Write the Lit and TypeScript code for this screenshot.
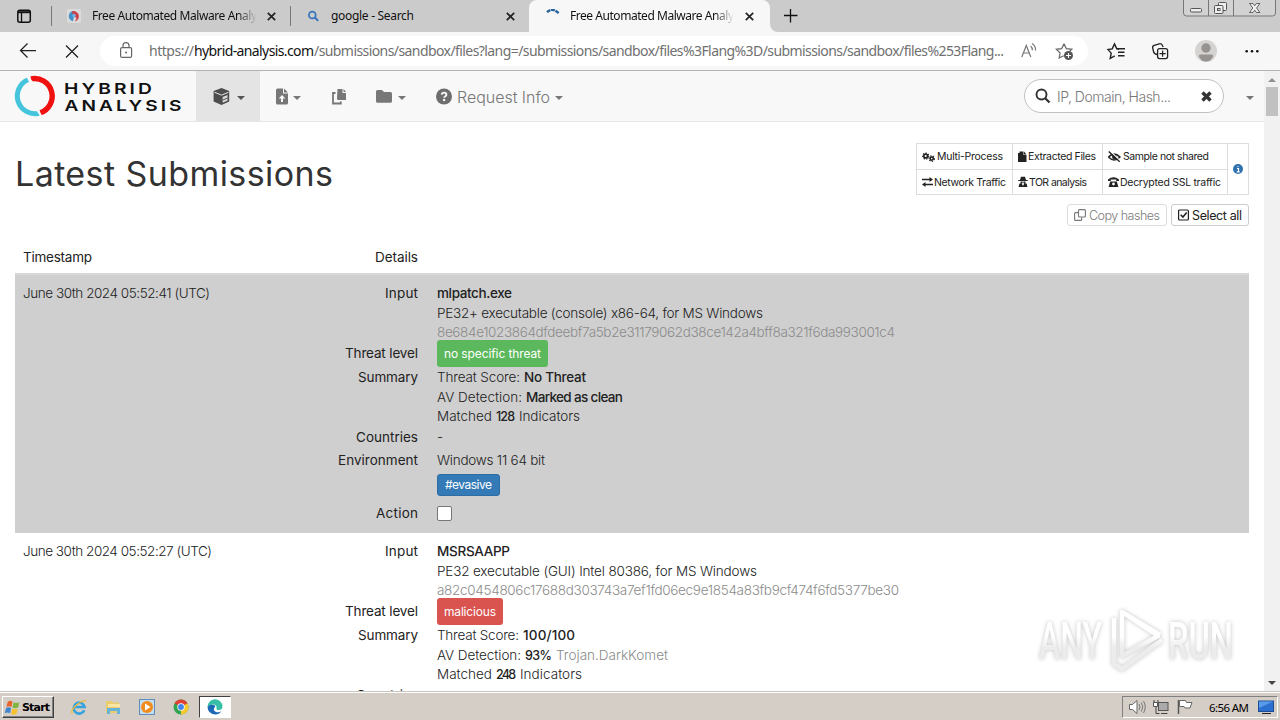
import { html, svg, css, LitElement, nothing } from "lit";
import { customElement, property } from "lit/decorators.js";

// A single line of text whose tracking is spread over a fixed width.
@customElement("fit-text")
export class FitText extends LitElement {
	static styles = css`
		:host {
			display: inline-block;
			white-space: nowrap;
			text-align: left;
		}
	`;

	@property({ type: String }) text = "";
	@property({ type: Number }) width = 0;

	render() {
		return html`<span>${this.text}</span>`;
	}

	updated() {
		const span = this.renderRoot.querySelector("span")!;
		span.style.letterSpacing = "0";
		const natural = span.getBoundingClientRect().width;
		const gaps = Math.max(1, this.text.length - 1);
		span.style.letterSpacing = `${(this.width - natural) / gaps}px`;
		this.style.width = `${this.width}px`;
	}
}

const fit = (text: string, width: number, cls = "") =>
	html`<fit-text class=${cls} .text=${text} .width=${width}></fit-text>`;

const caret = html`<svg class="caret" width="8" height="4" viewBox="0 0 8 4"><path d="M0 0h8L4 4z" fill="currentColor" /></svg>`;

const close = html`<svg class="close" width="9" height="9" viewBox="0 0 9 9">
	<path d="M.8.8l7.4 7.4M8.2.8L.8 8.2" stroke="#222" stroke-width="1.7" />
</svg>`;

const gear = (cx: number, cy: number, r: number) => svg`
	<circle cx=${cx} cy=${cy} r=${r} fill="none" stroke="#222" stroke-width="1.6" />
	<circle cx=${cx} cy=${cy} r=${r + 1.1} fill="none" stroke="#222" stroke-width="1.2" stroke-dasharray="1.4 1.3" />`;

const legendIcons = {
	gears: svg`${gear(3.7, 5, 1.9)}${gear(9.7, 7.6, 1.6)}`,
	file: svg`<path d="M0 2h1.5V.5h4V4h3v7H0z" fill="#222" /><path d="M6 .5l2.5 3H6z" fill="#222" />`,
	hidden: svg`<path d="M.5 6Q6 .3 12 6 6 12 .5 6z" fill="none" stroke="#222" stroke-width="1.5" /><circle cx="6.3" cy="6" r="2.3" fill="#222" /><path d="M2.2 0l10 10" stroke="#fff" stroke-width="1.2" /><path d="M.7.6l11 10.2" stroke="#222" stroke-width="1.4" />`,
	arrows: svg`<path d="M0 3.5h8M2.5 8.5H11" stroke="#222" stroke-width="1.3" /><path d="M7.5.9L11 3.5 7.5 6.1zM3.5 5.9L0 8.5l3.5 2.6z" fill="#222" />`,
	agent: svg`<path d="M2 4h6L7 .8H3zM.3 4h9.4v1H.3zM2.6 5.6h2v1.6h-2zM5.4 5.6h2v1.6h-2zM.6 11l.7-3.200L3.500 7 5 10l1.500-3 2.200.800.700 3.200z" fill="#222" />`,
	phone: svg`<path d="M0 5V3.400Q5.500-1 11 3.400V5H8.300V3.500H2.700V5zM2.200 5.400h6.600L10.400 11H.6z" fill="#222" /><circle cx="5.500" cy="8" r="1.400" fill="#fff" />`,
};

const legend: [keyof typeof legendIcons, number, string, number][][] = [
	[
		["gears", 15, "Multi-Process", 66],
		["file", 10, "Extracted Files", 68],
		["hidden", 15, "Sample not shared", 86],
	],
	[
		["arrows", 12, "Network Traffic", 72],
		["agent", 11, "TOR analysis", 58],
		["phone", 12, "Decrypted SSL traffic", 101],
	],
];

interface Line {
	parts: [text: string, width: number, cls?: string][];
}

interface Submission {
	time: [string, number];
	name: [string, number];
	type: [string, number];
	hash: [string, number];
	verdict: [string, number, string];
	summary: Line[];
	countries?: string;
	environment?: [string, number];
	tag?: [string, number];
}

const submissions: Submission[] = [
	{
		time: ["June 30th 2024 05:52:41 (UTC)", 187],
		name: ["mlpatch.exe", 75],
		type: ["PE32+ executable (console) x86-64, for MS Windows", 326],
		hash: ["8e684e1023864dfdeebf7a5b2e31179062d38ce142a4bff8a321f6da993001c4", 458],
		verdict: ["no specific threat", 97, "ok"],
		summary: [
			{ parts: [["Threat Score:", 83], ["No Threat", 62, "strong"]] },
			{ parts: [["AV Detection:", 85], ["Marked as clean", 97, "strong"]] },
			{ parts: [["Matched", 55], ["128", 19, "strong num"], ["Indicators", 61]] },
		],
		countries: "-",
		environment: ["Windows 11 64 bit", 108],
		tag: ["#evasive", 47],
	},
	{
		time: ["June 30th 2024 05:52:27 (UTC)", 189],
		name: ["MSRSAAPP", 73],
		type: ["PE32 executable (GUI) Intel 80386, for MS Windows", 320],
		hash: ["a82c0454806c17688d303743a7ef1fd06ec9e1854a83fb9cf474f6fd5377be30", 462],
		verdict: ["malicious", 52, "bad"],
		summary: [
			{ parts: [["Threat Score:", 82], ["100/100", 52, "strong"]] },
			{ parts: [["AV Detection:", 84], ["93%", 27, "strong num"], ["Trojan.DarkKomet", 112, "muted"]] },
			{ parts: [["Matched", 55], ["248", 20, "strong num"], ["Indicators", 62]] },
		],
	},
];

@customElement("submission-row")
export class SubmissionRow extends LitElement {
	static styles = css`
		:host {
			display: grid;
			grid-template-columns: 322px 81px 1fr;
			padding: 9px 0 0 0;
			height: 249px;
			line-height: 19.5px;
		}
		.time {
			grid-row: 1 / 8;
			padding-left: 8px;
			font-weight: 300;
		}
		.details {
			grid-column: 2 / 4;
			display: grid;
			grid-template-columns: 81px 1fr;
			column-gap: 19px;
			grid-template-rows: 56px 28px 60px 23px 21px 32px 24px;
		}
		.label {
			text-align: right;
			font-weight: 400;
		}
		.value {
			font-weight: 300;
			white-space: nowrap;
		}
		.value > div {
			display: flex;
			gap: 4px;
		}
		.level {
			padding-top: 4px;
		}
		.strong {
			font-weight: 500;
		}
		.num {
			font-size: 12.5px;
		}
		.muted {
			color: #8b8b8b;
		}
		.badge {
			display: inline-block;
			box-sizing: border-box;
			height: 27px;
			line-height: 28px;
			padding: 0 7px;
			border-radius: 3px;
			color: #fff;
			font-size: 12px;
			font-weight: 400;
		}
		.ok {
			background: #5cb85c;
		}
		.bad {
			background: #d9534f;
		}
		.tag {
			height: 22px;
			line-height: 20px;
			margin-top: 2px;
			background: #337ab7;
			border: 1px solid #2e6da4;
		}
		.box {
			width: 13px;
			height: 13px;
			margin-top: 2px;
			border: 1px solid #767676;
			border-radius: 2px;
			background: #fff;
		}
	`;

	@property({ attribute: false }) item!: Submission;

	render() {
		const s = this.item;
		return html`
			<div class="time">${fit(...s.time)}</div>
			<div class="details">
				<div class="label">${fit("Input", 33)}</div>
				<div class="value">
					<div>${fit(s.name[0], s.name[1], "strong")}</div>
					<div>${fit(...s.type)}</div>
					<div>${fit(s.hash[0], s.hash[1], "muted")}</div>
				</div>
				<div class="label level">${fit("Threat level", 73)}</div>
				<div class="value"><span class="badge ${s.verdict[2]}">${fit(s.verdict[0], s.verdict[1])}</span></div>
				<div class="label">${fit("Summary", 60)}</div>
				<div class="value">
					${s.summary.map((line) => html`<div>${line.parts.map((p) => fit(p[0], p[1], p[2]))}</div>`)}
				</div>
				<div class="label">${fit("Countries", 62)}</div>
				<div class="value">${s.countries ?? nothing}</div>
				${s.environment && s.tag
					? html`
							<div class="label">${fit("Environment", 80)}</div>
							<div class="value">${fit(...s.environment)}</div>
							<div></div>
							<div class="value"><span class="badge tag">${fit(...s.tag)}</span></div>
							<div class="label">${fit("Action", 42)}</div>
							<div class="value"><div class="box"></div></div>
						`
					: nothing}
			</div>
		`;
	}
}

@customElement("app-root")
export class AppRoot extends LitElement {
	static styles = css`
		:host {
			display: flex;
			flex-direction: column;
			position: relative;
			width: 1280px;
			height: 720px;
			overflow: hidden;
			background: #fff;
			color: #222;
			font-family: Inter, "Liberation Sans", sans-serif;
			font-size: 13.5px;
		}
		svg {
			display: block;
			flex: none;
		}
		.tabs {
			display: flex;
			height: 32px;
			background: #cbcbcb;
			font: 12px/32px "Noto Sans", sans-serif;
			color: #111;
		}
		.tab {
			display: flex;
			align-items: center;
			box-sizing: border-box;
			height: 32px;
		}
		.t1 {
			width: 239px;
			padding-left: 15px;
			border-right: 1px solid #777;
			height: 20px;
			margin-top: 6px;
			line-height: 20px;
		}
		.t2 {
			width: 238px;
			padding-left: 16px;
		}
		.t3 {
			width: 241px;
			padding-left: 17px;
			background: #f7f7f7;
			border-radius: 8px 8px 0 0;
		}
		.t1 fit-text,
		.t3 fit-text {
			margin: 0 10px 0 11px;
			-webkit-mask-image: linear-gradient(90deg, #000 88%, transparent);
			mask-image: linear-gradient(90deg, #000 88%, transparent);
		}
		.t3 fit-text {
			margin-left: 10px;
			margin-right: 11px;
		}
		.t2 fit-text {
			margin: 0 92px 0 11px;
		}
		.toolbar {
			display: flex;
			align-items: center;
			height: 38px;
			background: #f7f7f7;
			border-bottom: 1px solid #b4b4b4;
		}
		.address {
			display: flex;
			align-items: center;
			width: 988px;
			height: 30px;
			border-radius: 15px;
			background: #fff;
			color: #707070;
			font: 14px/30px "Noto Sans", sans-serif;
		}
		.address b {
			font-weight: 400;
			color: #111;
		}
		.page {
			display: flex;
			height: 620px;
		}
		.content {
			width: 1264px;
			overflow: hidden;
		}
		.navbar {
			display: flex;
			align-items: center;
			height: 50px;
			background: #f8f8f8;
			border-bottom: 1px solid #e7e7e7;
			color: #777;
			font-size: 16px;
			font-weight: 300;
		}
		.caret {
			margin-top: 4px;
		}
		.active {
			display: flex;
			align-items: center;
			box-sizing: border-box;
			width: 64px;
			height: 50px;
			padding-left: 17px;
			gap: 7px;
			background: #e4e4e4;
			color: #555;
		}
		.item {
			display: flex;
			align-items: center;
		}
		.upload {
			padding-left: 16px;
			gap: 5px;
			width: 55px;
		}
		.folder {
			padding-left: 29px;
			gap: 6px;
			width: 31px;
		}
		.info {
			margin-left: 29px;
			gap: 5px;
		}
		.info fit-text {
			padding-top: 2px;
		}
		.search {
			display: flex;
			align-items: center;
			box-sizing: border-box;
			width: 200px;
			height: 34px;
			margin: 0 22px 0 auto;
			padding: 0 10px 0 10px;
			border: 1px solid #c2c2c2;
			border-radius: 17px;
			background: #fff;
			font-size: 14px;
		}
		.search fit-text {
			margin: 1px 30px 0 6px;
		}
		.last {
			margin-right: 10px;
		}
		.head {
			display: flex;
			justify-content: space-between;
			height: 61px;
			padding: 21px 15px 0 15px;
		}
		h1 {
			margin: 0;
			font-size: 34px;
			font-weight: 400;
			line-height: 62px;
			color: #333;
		}
		.legend {
			display: grid;
			grid-template-columns: 96px 90px 125px 20px;
			grid-template-rows: 26px 24px;
			box-sizing: border-box;
			width: 333px;
			height: 52px;
			border: 1px solid #ddd;
			font-size: 10.5px;
		}
		.cell {
			display: flex;
			align-items: center;
			padding-left: 5px;
			border-right: 1px solid #ddd;
		}
		.upper {
			border-bottom: 1px solid #ddd;
		}
		.tip {
			grid-column: 4;
			grid-row: 1 / 3;
			display: flex;
			align-items: center;
			padding-left: 5px;
		}
		.actions {
			display: flex;
			justify-content: flex-end;
			gap: 4px;
			height: 22px;
			padding-right: 15px;
			font-size: 12.5px;
			font-weight: 300;
		}
		.btn {
			display: flex;
			align-items: center;
			box-sizing: border-box;
			height: 22px;
			padding: 0 6px;
			gap: 3px;
			border: 1px solid #ccc;
			border-radius: 3px;
			font-weight: 400;
		}
		.disabled {
			width: 100px;
			border-color: #ddd;
			color: #7c7c7c;
			font-weight: 300;
		}
		.all {
			width: 78px;
		}
		.table {
			margin: 0 15px;
		}
		.thead {
			display: flex;
			height: 49px;
			box-sizing: border-box;
			padding: 21px 0 0 8px;
			line-height: 20px;
			border-bottom: 2px solid #d8d8d8;
		}
		.thead fit-text + fit-text {
			margin-left: 283px;
		}
		.odd {
			background: #cfcfcf;
		}
		.scroll {
			display: flex;
			flex-direction: column;
			justify-content: space-between;
			width: 16px;
			background: #f1f1f1;
		}
		.thumb {
			width: 12px;
			height: 29px;
			margin: 3px 2px 0;
			background: #c1c1c1;
		}
		.taskbar {
			display: flex;
			justify-content: space-between;
			box-sizing: border-box;
			height: 29px;
			padding: 4px 2px 2px;
			background: #d5cec6;
			border-top: 1px solid #c9c5bf;
			box-shadow: inset 0 1px #fff;
			color: #000;
		}
		.start {
			display: flex;
			align-items: center;
			box-sizing: border-box;
			width: 52px;
			height: 22px;
			gap: 1px;
			padding-left: 1px;
			border: 1px solid;
			border-color: #fff #404040 #404040 #fff;
			box-shadow: inset -1px -1px #808080;
			font: bold 11px "DejaVu Sans", sans-serif;
		}
		.quick {
			display: flex;
			align-items: center;
			gap: 18px;
			margin-right: auto;
			padding-left: 17px;
		}
		.edge {
			display: flex;
			align-items: center;
			justify-content: center;
			box-sizing: border-box;
			width: 32px;
			height: 22px;
			margin-left: -8px;
			border: 1px solid;
			border-color: #404040 #fff #fff #404040;
			background: #fff;
		}
		.tray {
			display: flex;
			align-items: center;
			box-sizing: border-box;
			width: 156px;
			height: 22px;
			border: 1px solid;
			border-color: #808080 #fff #fff #808080;
			font: 11.5px "Noto Sans", sans-serif;
		}
		.tray fit-text {
			margin: 0 9px 0 14px;
		}
		.watermark {
			position: absolute;
			left: 1030px;
			top: 600px;
			filter: drop-shadow(0 0 2px rgba(0, 0, 0, 0.24));
		}
	`;

	private tabs() {
		return html`
			<div class="tabs">
				<svg width="52" height="32" viewBox="0 0 52 32">
					<rect x="17.800" y="10.300" width="12.500" height="11.900" rx="2" fill="none" stroke="#111" stroke-width="1.500" />
					<path d="M18 12.200h12.500" stroke="#111" stroke-width="2" />
					<path d="M21.500 12v10" stroke="#111" stroke-width="1.300" />
					<path d="M51.500 6v20" stroke="#777" />
				</svg>
				<div class="tab t1">
					<svg width="14" height="14" viewBox="0 0 14 14">
						<rect width="14" height="14" rx="1" fill="#dadada" />
						<path d="M8 2a5 5 0 0 0-2 10.300z" fill="#3f8fc8" />
						<path d="M5 2.200A5.300 5.300 0 1 1 8 12.500L9.500 9 6 7z" fill="#cf3f49" />
						<circle cx="7" cy="6.500" r="1.800" fill="#6fb1dd" />
					</svg>
					${fit("Free Automated Malware Analy", 165)} ${close}
				</div>
				<div class="tab t2">
					<svg width="13" height="13" viewBox="0 0 13 13">
						<circle cx="5.300" cy="5" r="3.400" fill="none" stroke="#3374bd" stroke-width="1.700" />
						<path d="M7.800 7.500l3.400 3.400" stroke="#3374bd" stroke-width="2" />
					</svg>
					${fit("google - Search", 83)} ${close}
				</div>
				<div class="tab t3">
					<svg width="14" height="14" viewBox="0 0 14 14">
						<path d="M1 3.200Q6.500-2 12.700 4.200" fill="none" stroke="#27649f" stroke-width="2.400" stroke-dasharray="4 .6" />
					</svg>
					${fit("Free Automated Malware Analy", 164)} ${close}
				</div>
				<svg width="510" height="32" viewBox="770 0 510 32">
					<path d="M770 24v8h8a8 8 0 0 1-8-8z" fill="#f7f7f7" />
					<path d="M784 15.500h13.500M790.500 9v13.500" stroke="#111" stroke-width="1.300" />
					<path d="M1183.500 0v13q0 3 3 3h86q3 0 3-3V0M1208.500 0v16M1233.500 0v16" fill="#d2d2d2" stroke="#777" />
					<rect x="1190.500" y="8.500" width="11" height="3.500" rx="1" fill="#eee" stroke="#555" />
					<rect x="1218.500" y="2.500" width="8" height="8" rx="1" fill="#eee" stroke="#555" />
					<rect x="1214.500" y="5.500" width="8.500" height="8" rx="1" fill="#eee" stroke="#555" />
					<rect x="1217.500" y="8.500" width="2.500" height="2" fill="#ccc" stroke="#555" />
					<path d="M1249.500 3.500h3.500l1.700 2.300 1.700-2.300h3.500l-3.300 4.500 3.300 4.500h-3.500l-1.700-2.300-1.700 2.300h-3.500l3.300-4.500z" fill="#eee" stroke="#555" stroke-width=".9" />
				</svg>
			</div>
		`;
	}

	private toolbar() {
		return html`
			<div class="toolbar">
				<svg width="100" height="38" viewBox="0 32 100 38">
					<path d="M36 50.500H20.700M27.500 43.500l-7 7 7 7M66 45.500l12 12M78 45.500l-12 12" fill="none" stroke="#222" stroke-width="1.250" />
				</svg>
				<div class="address">
					<svg width="49" height="30" viewBox="100 36 49 30">
						<rect x="120.600" y="47.600" width="11" height="9.800" rx="1.500" fill="none" stroke="#666" stroke-width="1.200" />
						<path d="M123 47.500v-1.800a3 3 0 0 1 6 0v1.800" fill="none" stroke="#666" stroke-width="1.200" />
						<circle cx="126" cy="52.500" r="1" fill="#666" />
					</svg>
					${fit("https://", 45)}<b>${fit("hybrid-analysis.com", 120)}</b>
					${fit("/submissions/sandbox/files?lang=/submissions/sandbox/files%3Flang%3D/submissions/sandbox/files%253Flang...", 690)}
					<svg width="83" height="30" viewBox="1005 36 83 30">
						<path d="M1022.800 57l4.500-11.500 4.500 11.500M1024.500 53h5.600M1031.500 46q2 1.500 1.800 4.200M1033 43.500q4 2.500 3.500 7" fill="none" stroke="#777" stroke-width="1.200" />
						<path d="M1065 43.700l2.300 4.900 5.600.700-4 3.800.500 2M1064.700 55.700l-4.500 2.300.900-5-3.800-3.700 5.400-.7 2.300-4.900" fill="none" stroke="#666" stroke-width="1.200" />
						<circle cx="1069.500" cy="55.500" r="4.500" fill="#555" />
						<path d="M1067 55.500h5M1069.500 53v5" stroke="#fff" />
					</svg>
				</div>
				<svg width="192" height="38" viewBox="1088 32 192 38">
					<path d="M1119 49.200l-2.200-.4-2.300-4.800-2.300 4.900-4.200.700 3.200 3.500-1 5.400 4.500-2.600M1117 48.700h8M1118 52.300h6.500M1118 55.800h6.500" fill="none" stroke="#222" stroke-width="1.400" />
					<path d="M1157 54.500q-3-.5-3.500-3l-.8-3.500q-.5-2 1.500-2.700l5-1.500q2-.5 3 1.200l1 2" fill="none" stroke="#222" stroke-width="1.300" />
					<rect x="1157.600" y="48.600" width="10" height="10" rx="2" fill="#f7f7f7" stroke="#222" stroke-width="1.300" />
					<path d="M1159.500 53.600h6.200M1162.600 50.500v6.200" stroke="#222" stroke-width="1.200" />
					<circle cx="1206" cy="51" r="11" fill="#d5d3d1" />
					<circle cx="1206" cy="48" r="4.700" fill="#979390" />
					<path d="M1198.800 56q0-1.500 2-1.500h10.400q2 0 2 1.500-2 5.500-7.200 5.500t-7.200-5.500z" fill="#979390" />
					<g fill="#111"><circle cx="1246.700" cy="51.200" r="1.300" /><circle cx="1252" cy="51.200" r="1.300" /><circle cx="1257.300" cy="51.200" r="1.300" /></g>
				</svg>
			</div>
		`;
	}

	private navbar() {
		return html`
			<div class="navbar">
				<svg width="196" height="50" viewBox="0 71 196 50">
					<path d="M39 113.200A17.700 17.700 0 0 1 28 79.700" fill="none" stroke="#45c5dc" stroke-width="5" />
					<path d="M31 78.800A17.700 17.700 0 0 1 40.500 112.800" fill="none" stroke="#f01010" stroke-width="5.400" />
					<path d="M25.500 75.500l7 6.500M35.500 108.500l6 7.500" stroke="#f8f8f8" stroke-width="1.600" />
					<g fill="#111" font-family="Inter, sans-serif" font-size="15" font-weight="600" letter-spacing="2.400">
						<text x="64" y="94" textLength="91" lengthAdjust="spacingAndGlyphs">HYBRID</text>
						<text x="64.500" y="111" textLength="120" lengthAdjust="spacingAndGlyphs">ANALYSIS</text>
					</g>
				</svg>
				<div class="active">
					<svg width="17" height="17" viewBox="0 0 17 17">
						<path d="M8.500 0l7.700 3v10.500L8.500 17 .6 13.500V3z" fill="#4d4d4d" />
						<path d="M1.500 4.300l7 2.800 7-2.800" fill="none" stroke="#e4e4e4" />
						<path d="M9.700 9l4.800-2v5.500l-4.800 2.200z" fill="#dcdcdc" />
						<path d="M10 12l4.500-2" stroke="#4d4d4d" />
					</svg>
					${caret}
				</div>
				<div class="item upload">
					<svg width="12" height="17" viewBox="0 0 12 17">
						<path d="M1.500.500H7v5h5V15q0 1.500-1.500 1.500h-9Q0 16.500 0 15V2Q0 .5 1.500.500zM8 .5L12 4.500H8z" fill="#777" />
						<path d="M6 7l3.300 3.500H7v3.500H5v-3.500H2.700z" fill="#f8f8f8" />
					</svg>
					${caret}
				</div>
				<svg width="16" height="17" viewBox="0 0 16 17">
					<path d="M6.500 1h5V5H15v7H7.500q-1.500 0-1.500-1.500zM12.500 1L15 4h-2.500z" fill="#777" />
					<path d="M4.500 5H2v10.500h7.800V13.500" fill="none" stroke="#777" stroke-width="1.800" />
				</svg>
				<div class="item folder">
					<svg width="16" height="17" viewBox="0 0 16 17">
						<path d="M1.500 2H6l2 2h6.500Q16 4 16 5.500v7.800q0 1.500-1.500 1.500h-13Q0 14.800 0 13.300V3.500Q0 2 1.500 2z" fill="#777" />
					</svg>
					${caret}
				</div>
				<div class="item info">
					<svg width="16" height="17" viewBox="0 0 16 17">
						<circle cx="8" cy="8.500" r="8" fill="#6e6e6e" />
						<path d="M5.700 6.600q.3-2 2.400-2 2.300.1 2.300 2 0 1.300-1.300 1.900-.9.500-.9 1.300" fill="none" stroke="#f8f8f8" stroke-width="1.900" />
						<circle cx="8.100" cy="12" r="1.200" fill="#f8f8f8" />
					</svg>
					${fit("Request Info", 93)} ${caret}
				</div>
				<div class="search">
					<svg width="16" height="16" viewBox="0 0 16 16">
						<circle cx="6.500" cy="6.500" r="5" fill="none" stroke="#333" stroke-width="1.900" />
						<path d="M10.200 10.200l4.300 4.300" stroke="#333" stroke-width="2.300" />
					</svg>
					${fit("IP, Domain, Hash...", 114)}
					<svg width="11" height="11" viewBox="0 0 11 11">
						<path d="M1.500 1.500l8 8M9.500 1.500l-8 8" stroke="#333" stroke-width="3.400" />
					</svg>
				</div>
				<div class="last">${caret}</div>
			</div>
		`;
	}

	private header() {
		return html`
			<div class="head">
				<h1>${fit("Latest Submissions", 318)}</h1>
				<div class="legend">
					${legend.map((row, i) =>
						row.map(
							([icon, width, label, size]) => html`
								<div class="cell ${i ? "" : "upper"}">
									<svg width=${width} height="12" viewBox="0 0 ${width} 12">${legendIcons[icon]}</svg>
									${fit(label, size)}
								</div>
							`
						)
					)}
					<div class="tip">
						<svg width="10" height="10" viewBox="0 0 10 10">
							<circle cx="5" cy="5" r="5" fill="#2f72ae" />
							<path d="M4 4.500h1.500v3.300M3.700 7.800h3M4.500 2.500h1" fill="none" stroke="#fff" stroke-width="1.200" />
						</svg>
					</div>
				</div>
			</div>
			<div class="actions">
				<div class="btn disabled">
					<svg width="12" height="12" viewBox="0 0 12 12">
						<rect x="4.500" y=".600" width="6.900" height="7.400" rx="1" fill="none" stroke="#777" stroke-width="1.100" />
						<path d="M4 3.600H1.600q-1 0-1 1v5.800q0 1 1 1h5q1 0 1-1V8.500" fill="none" stroke="#777" stroke-width="1.100" />
					</svg>
					${fit("Copy hashes", 71)}
				</div>
				<div class="btn all">
					<svg width="11" height="12" viewBox="0 0 11 12">
						<rect x=".600" y="1" width="9.800" height="10" rx="1" fill="none" stroke="#222" stroke-width="1.200" />
						<path d="M2.700 5.700l2.200 2.400 3.800-4.600" fill="none" stroke="#222" stroke-width="1.500" />
					</svg>
					${fit("Select all", 50)}
				</div>
			</div>
		`;
	}

	private taskbar() {
		return html`
			<div class="taskbar">
				<div class="start">
					<svg width="17" height="17" viewBox="0 0 16 16">
						<path d="M3.500 2.500Q6 .8 8 2.500L7 7.500Q4.500 6 2.300 7.500z" fill="#e8642c" />
						<path d="M9 3q2.500 1.500 5.500 0l-1.300 5Q10.500 9.300 8 8z" fill="#7fb541" />
						<path d="M2 8.500q2.300-1.400 4.700 0l-1 5q-2.500-1.500-5 0z" fill="#3f86cf" />
						<path d="M7.700 9q2.500 1.400 5.200.200l-1.200 4.800q-2.700 1.300-5 0z" fill="#f6c12f" />
					</svg>
					${fit("Start", 28)}
				</div>
				<div class="quick">
					<svg width="16" height="16" viewBox="0 0 16 16">
						<path d="M13.300 11.200A5.500 5.500 0 1 1 13.600 8H4" fill="none" stroke="#36a3df" stroke-width="2.600" />
						<path d="M1.500 14.500Q-1 12 5 6.500T15 2" fill="none" stroke="#f0bb35" stroke-width="1.300" />
					</svg>
					<svg width="16" height="16" viewBox="0 0 16 16">
						<path d="M1 2h6l1 1.500h6V14H1z" fill="#eacb6d" />
						<path d="M3 5h12v3H3z" fill="#f7e6a2" />
						<path d="M2 9h13v6h-3v-3H5v3H2z" fill="#67b4db" />
					</svg>
					<svg width="16" height="16" viewBox="0 0 16 16">
						<rect x=".500" y=".500" width="15" height="15" fill="#c9dcec" stroke="#5c8fc0" />
						<circle cx="8" cy="8" r="6" fill="#f08c1e" />
						<path d="M6 4.500L11.500 8 6 11.500z" fill="#fff" />
					</svg>
					<svg width="16" height="16" viewBox="0 0 16 16">
						<circle cx="8" cy="8" r="7.500" fill="#32a350" />
						<path d="M8 8L1.500 4.300a7.500 7.500 0 0 1 13 0z" fill="#de4034" />
						<path d="M8 8l6.500-3.700A7.500 7.500 0 0 1 8 15.500z" fill="#f8c92c" />
						<circle cx="8" cy="8" r="3.700" fill="#fff" />
						<circle cx="8" cy="8" r="2.900" fill="#4284ed" />
					</svg>
					<div class="edge">
						<svg width="16" height="16" viewBox="0 0 16 16">
							<path d="M.5 8A7.500 7.500 0 0 1 15.500 7.500q0 3.500-4 3.500-2.500 0-2-1.800Q10 6 6.800 5.500 3 5 .5 8z" fill="#38bda6" />
							<path d="M.5 8Q2.500 5.300 5.500 5.800 8.700 6.200 8.200 7.500 5 11 9 13q3 1 5.500-1Q12 15.700 8 15.500 1 15 .5 8z" fill="#1b68b5" />
						</svg>
					</div>
				</div>
				<div class="tray">
					<svg width="72" height="20" viewBox="1123 697 72 20">
						<path d="M1129.500 704.500h3l4.500-4v13l-4.500-4h-3z" fill="#fff" stroke="#666" />
						<path d="M1139 704q2 3 0 6M1141.300 702.500q3 4.500 0 9M1143.500 701q3.500 6 0 12" fill="none" stroke="#777" />
						<rect x="1158.500" y="702.500" width="9.500" height="8" fill="#aaa" stroke="#555" />
						<path d="M1161 713.500h6.500M1154 700v3h4v-3M1156 703v10.500h3.500" fill="none" stroke="#444" />
						<path d="M1153.500 702.500h4v4h-4z" fill="#fff" stroke="#555" />
						<path d="M1178.500 700v14" stroke="#555" stroke-width="1.500" />
						<path d="M1179.500 700.500h6l1 2h5.500l-2 5.500h-5l-1-1.500h-4.500z" fill="#fff" stroke="#666" />
					</svg>
					${fit("6:56 AM", 40)}
					<svg width="16" height="16" viewBox="0 0 16 16">
						<rect x=".500" y="2" width="15" height="10.500" fill="#2b6fd0" stroke="#1f4d94" />
						<path d="M1 2.500h14L1 9z" fill="#5a9aea" />
						<path d="M4 14.500h9" stroke="#223" />
					</svg>
				</div>
			</div>
		`;
	}

	render() {
		return html`
			${this.tabs()} ${this.toolbar()}
			<div class="page">
				<div class="content">
					${this.navbar()} ${this.header()}
					<div class="table">
						<div class="thead">${fit("Timestamp", 69)} ${fit("Details", 43)}</div>
						${submissions.map((s, i) => html`<submission-row class=${i % 2 ? "" : "odd"} .item=${s}></submission-row>`)}
					</div>
				</div>
				<div class="scroll">
					<div>
						<svg width="16" height="13" viewBox="0 0 16 13"><path d="M4 11l4-4 4 4z" fill="#909090" /></svg>
						<div class="thumb"></div>
					</div>
					<svg width="16" height="16" viewBox="0 0 16 16"><path d="M4 6h8l-4 4z" fill="#444" /></svg>
				</div>
			</div>
			${this.taskbar()}
			<svg class="watermark" width="225" height="80" viewBox="0 0 225 80">
				<defs>
					<linearGradient id="fade" x1="0" y1="0" x2="0" y2="80" gradientUnits="userSpaceOnUse">
						<stop offset=".45" stop-color="#fff" />
						<stop offset=".6" stop-color="#ececec" />
					</linearGradient>
				</defs>
				<g fill="url(#fade)" font-family="Roboto, sans-serif" font-size="51" font-weight="500">
					<text x="9" y="59" textLength="63" lengthAdjust="spacingAndGlyphs">ANY</text>
					<text x="138" y="59" textLength="65" lengthAdjust="spacingAndGlyphs">RUN</text>
				</g>
				<path d="M92 12v44l36-20zM92 12l38 23M84 18v46l8 5 40-29" fill="none" stroke="url(#fade)" stroke-width="4.500" stroke-linejoin="round" />
			</svg>
		`;
	}
}
